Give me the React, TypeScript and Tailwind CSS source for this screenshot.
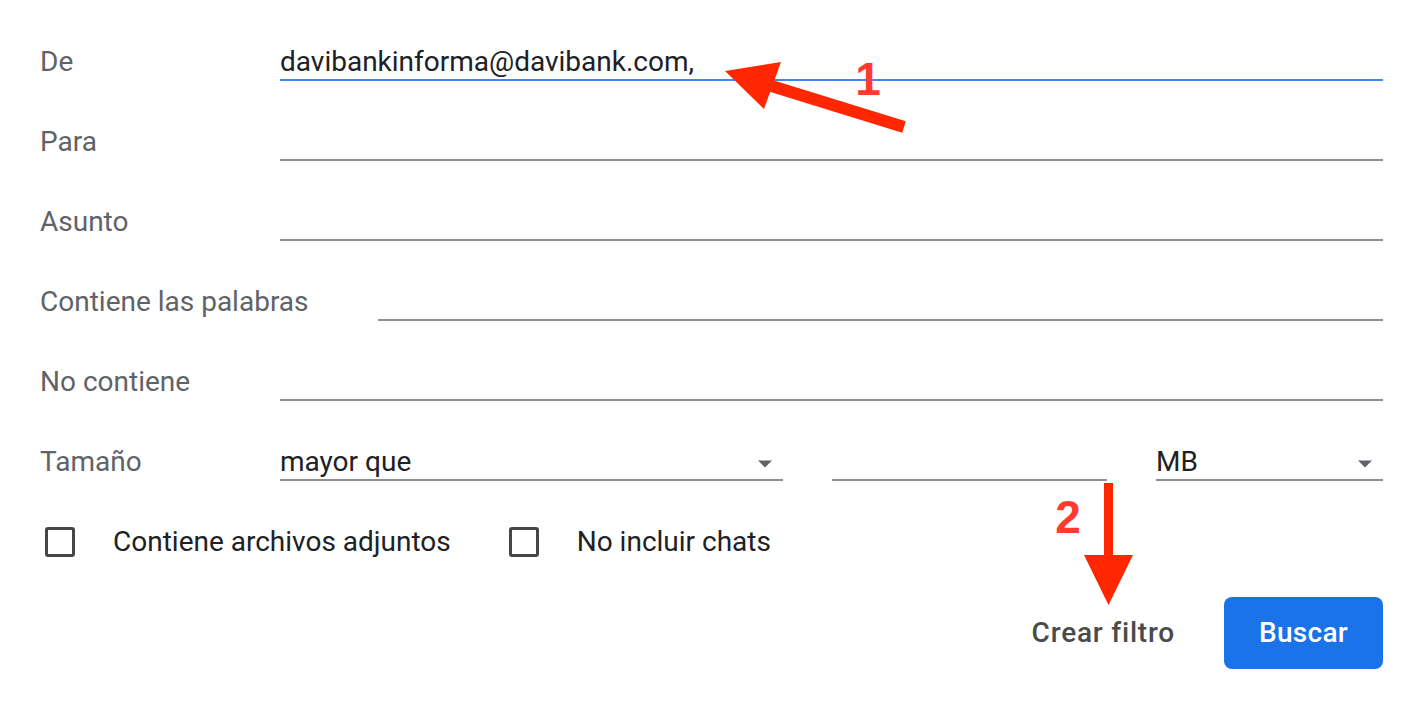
import React from "react";

const labelCls =
  "shrink-0 h-[34px] mb-[2px] leading-[34px] text-[28px] text-[#5f6368]";

function Caret() {
  return (
    <svg width="16" height="8" viewBox="0 0 16 8" className="mb-[11px] mr-[10px]">
      <path d="M1 0.5 L15 0.5 L8 7.5 Z" fill="#5f6368" />
    </svg>
  );
}

function TextRow({
  label,
  value,
  labelWidth = "w-[240px]",
  active = false,
}: {
  label: string;
  value?: string;
  labelWidth?: string;
  active?: boolean;
}) {
  return (
    <div className="flex h-[80px] items-end">
      <div className={`${labelCls} ${labelWidth}`}>{label}</div>
      <div
        className={`flex-1 h-[36px] leading-[34px] text-[28px] text-[#202124] border-b-2 ${
          active ? "border-[#4285f4]" : "border-[#8f8f8f]"
        }`}
      >
        {value}
      </div>
    </div>
  );
}

function Checkbox({ label }: { label: string }) {
  return (
    <label className="flex items-center">
      <span className="block w-[30px] h-[30px] border-[3px] border-[#444746] rounded-[3px]" />
      <span className="ml-[38px] text-[28px] text-[#202124] leading-[34px]">{label}</span>
    </label>
  );
}

export default function App() {
  return (
    <div
      className="relative w-[1422px] h-[702px] bg-white overflow-hidden"
      style={{ fontFamily: "Roboto, 'Liberation Sans', sans-serif" }}
    >
      <div className="pl-[40px] pr-[39px] pt-[1px]">
        <TextRow label="De" value="davibankinforma@davibank.com," active />
        <TextRow label="Para" />
        <TextRow label="Asunto" />
        <TextRow label="Contiene las palabras" labelWidth="w-[338px]" />
        <TextRow label="No contiene" />

        {/* size row: comparison, amount, unit */}
        <div className="flex h-[80px] items-end">
          <div className={`${labelCls} w-[240px]`}>Tamaño</div>
          <div className="flex flex-1 gap-[49px]">
            <div className="w-[503px] h-[36px] flex items-end justify-between border-b-2 border-[#8f8f8f]">
              <span className="leading-[34px] text-[28px] text-[#202124]">mayor que</span>
              <Caret />
            </div>
            <div className="flex-1 h-[36px] border-b-2 border-[#8f8f8f]" />
            <div className="w-[227px] h-[36px] flex items-end justify-between border-b-2 border-[#8f8f8f]">
              <span className="leading-[34px] text-[28px] text-[#202124]">MB</span>
              <Caret />
            </div>
          </div>
        </div>

        <div className="flex items-center gap-[58px] mt-[44px] pl-[5px]">
          <Checkbox label="Contiene archivos adjuntos" />
          <Checkbox label="No incluir chats" />
        </div>

        <div className="flex items-center justify-end gap-[49px] mt-[38px]">
          <button className="text-[28px] font-medium tracking-[0.8px] text-[#4a4a4a] leading-[34px]">
            Crear filtro
          </button>
          <button className="w-[159px] h-[72px] rounded-[8px] bg-[#1a73e8] text-white text-[28px] font-medium tracking-[0.3px]">
            Buscar
          </button>
        </div>
      </div>

      {/* red annotation arrows drawn over the form */}
      <svg
        className="absolute left-0 top-0 pointer-events-none"
        width="1422"
        height="702"
        viewBox="0 0 1422 702"
      >
        <line x1="765" y1="84" x2="904" y2="127" stroke="#ff2600" strokeWidth="12" />
        <polygon points="725,71 781,62 764,109" fill="#ff2600" />
        <line x1="1108.5" y1="483" x2="1108.5" y2="558" stroke="#ff2600" strokeWidth="9" />
        <polygon points="1084,555 1133,555 1108.5,605" fill="#ff2600" />
        <text
          x="868"
          y="95"
          textAnchor="middle"
          fill="#ff3b30"
          fontSize="46"
          fontWeight="700"
          fontFamily="'Liberation Sans', Arial, sans-serif"
        >
          1
        </text>
        <text
          x="1068"
          y="533"
          textAnchor="middle"
          fill="#ff3b30"
          fontSize="46"
          fontWeight="700"
          fontFamily="'Liberation Sans', Arial, sans-serif"
        >
          2
        </text>
      </svg>
    </div>
  );
}
